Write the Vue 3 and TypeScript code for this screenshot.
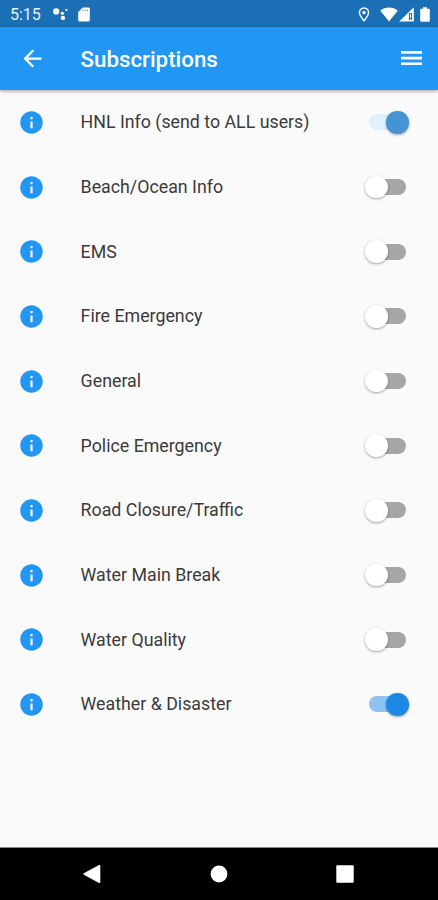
<script setup lang="ts">
import { ref } from 'vue'

interface Subscription {
  name: string
  on: boolean
  locked?: boolean
}

const subscriptions = ref<Subscription[]>([
  { name: 'HNL Info (send to ALL users)', on: true, locked: true },
  { name: 'Beach/Ocean Info', on: false },
  { name: 'EMS', on: false },
  { name: 'Fire Emergency', on: false },
  { name: 'General', on: false },
  { name: 'Police Emergency', on: false },
  { name: 'Road Closure/Traffic', on: false },
  { name: 'Water Main Break', on: false },
  { name: 'Water Quality', on: false },
  { name: 'Weather & Disaster', on: true },
])

function toggle(item: Subscription): void {
  if (!item.locked) item.on = !item.on
}
</script>

<template>
  <div class="screen">
    <div class="status">
      <span class="clock">5:15</span>
      <svg class="assist" width="16" height="14" viewBox="0 0 16 14" fill="#fff">
        <circle cx="4.2" cy="4.4" r="3.1" />
        <circle cx="10.4" cy="6.3" r="1.6" />
        <circle cx="10.9" cy="10.9" r="2.2" />
        <circle cx="14.4" cy="3" r="1.1" />
      </svg>
      <svg class="sd" width="12" height="15" viewBox="0 0 12 15">
        <path fill="#fff" d="M4.6 .5H10.4Q11.8 .5 11.8 1.9V13Q11.8 14.4 10.4 14.4H1.6Q.2 14.4 .2 13V5.2Z" />
        <path stroke="#1b70b5" stroke-opacity=".75" stroke-width="1" d="M5 2.6V4.2M7.2 2.6V4.2M9.4 2.6V4.2" />
      </svg>
      <span class="spacer"></span>
      <svg class="pin" width="12" height="15" viewBox="0 0 12 15" fill="none" stroke="#fff">
        <path stroke-width="1.4" d="M6 13.8C3.6 11 1.4 8.2 1.4 5.6A4.6 4.6 0 0 1 10.6 5.6C10.6 8.2 8.4 11 6 13.8Z" />
        <circle cx="6" cy="5.6" r="1.7" fill="#fff" stroke="none" />
      </svg>
      <svg class="wifi" width="18" height="15" viewBox="0 0 18 15">
        <path fill="#fff" d="M9 14.6L.3 3.8C2.8 1.6 5.7.5 9 .5S15.2 1.6 17.7 3.8Z" />
      </svg>
      <svg class="signal" width="15" height="15" viewBox="0 0 15 15">
        <path fill="#fff" d="M14.8.2V14.6H.2Z" />
        <path fill="#1b70b5" d="M9.9 6H13V13H9.9Z" />
        <path fill="#fff" d="M11 6.8H12V11H11ZM11 12H12V13H11Z" />
      </svg>
      <svg class="battery" width="10" height="15" viewBox="0 0 10 15">
        <path fill="#fff" d="M3 .2H7V1.7H8.6Q9.8 1.7 9.8 2.9V13.5Q9.8 14.7 8.6 14.7H1.4Q.2 14.7 .2 13.5V2.9Q.2 1.7 1.4 1.7H3Z" />
      </svg>
    </div>

    <header class="appbar">
      <button class="icon-button" aria-label="Back">
        <svg width="27" height="27" viewBox="0 0 24 24" fill="#fff">
          <path d="M20 11H7.83l5.59-5.59L12 4l-8 8 8 8 1.41-1.41L7.83 13H20v-2z" />
        </svg>
      </button>
      <h1>Subscriptions</h1>
      <button class="icon-button" aria-label="Menu">
        <svg width="21" height="16" viewBox="0 0 21 16" fill="#fff">
          <path d="M0 1.1H21V3.7H0ZM0 6.8H21V9.4H0ZM0 12.5H21V15.1H0Z" />
        </svg>
      </button>
    </header>

    <main class="list">
      <div v-for="item in subscriptions" :key="item.name" class="row">
        <svg class="info" width="27" height="27" viewBox="0 0 24 24" fill="#2196f3">
          <path d="M12 2C6.48 2 2 6.48 2 12s4.48 10 10 10 10-4.48 10-10S17.52 2 12 2zm1 15h-2v-6h2v6zm0-8h-2V7h2v2z" />
        </svg>
        <span class="label">{{ item.name }}</span>
        <button
          class="switch"
          :class="{ on: item.on, locked: item.locked }"
          role="switch"
          :aria-checked="item.on"
          :aria-label="item.name"
          @click="toggle(item)"
        >
          <span class="thumb"></span>
        </button>
      </div>
    </main>

    <nav class="navbar">
      <svg width="18" height="20" viewBox="0 0 18 20" fill="#fff">
        <path d="M.8 9.2Q-.2 10 .8 10.8L16 18.9Q17.3 19.4 17.3 18V2Q17.3.6 16 1.1Z" />
      </svg>
      <svg width="18" height="18" viewBox="0 0 18 18" fill="#fff">
        <circle cx="9" cy="9" r="8.4" />
      </svg>
      <svg width="18" height="18" viewBox="0 0 18 18" fill="#fff">
        <rect x=".3" y=".3" width="17.4" height="17.4" rx="1" />
      </svg>
    </nav>
  </div>
</template>

<style>
body {
  margin: 0;
}
</style>

<style scoped>
.screen {
  display: flex;
  flex-direction: column;
  width: 438px;
  height: 900px;
  overflow: hidden;
  background: #fafafa;
  font-family: Roboto, 'Liberation Sans', sans-serif;
}

button {
  padding: 0;
  border: 0;
  background: none;
}

svg {
  display: block;
  flex: none;
}

.status {
  display: flex;
  flex: none;
  align-items: center;
  box-sizing: border-box;
  height: 27px;
  padding: 1px 8px 0 10px;
  background: #1b70b5;
}

.clock {
  width: 41px;
  padding-top: 1px;
  color: #e6f1fa;
  font-size: 16px;
  line-height: 20px;
}

.assist {
  margin-left: 1px;
}

.sd {
  margin-left: 10px;
}

.spacer {
  flex: 1;
}

.wifi {
  margin-left: 10px;
}

.signal {
  margin-left: 1px;
}

.battery {
  margin-left: 6px;
}

.appbar {
  display: flex;
  flex: none;
  align-items: center;
  box-sizing: border-box;
  height: 62.5px;
  padding: 0 16px 0 18.5px;
  background: #2196f3;
  box-shadow: 0 1px 4px rgba(0, 0, 0, 0.38);
}

h1 {
  flex: 1;
  margin: 2px 0 0 35px;
  color: #fff;
  font-size: 22.3px;
  font-weight: 500;
  line-height: 28px;
}

.list {
  flex: 1;
  padding-top: 0.6px;
}

.row {
  display: flex;
  align-items: center;
  height: 64.66px;
  padding: 0 32px 0 18.3px;
}

.label {
  flex: 1;
  margin-left: 35.3px;
  color: #3a3a3a;
  font-size: 17.8px;
  line-height: 24px;
}

.switch {
  display: flex;
  align-items: center;
  width: 37.5px;
  height: 16px;
  border-radius: 8px;
  background: #a6a6a6;
}

.thumb {
  flex: none;
  width: 22.5px;
  height: 22.5px;
  margin-left: -3.5px;
  border-radius: 50%;
  background: #fff;
  box-shadow: 0 1px 2.5px rgba(0, 0, 0, 0.36);
}

.switch.on {
  background: #8ec3f3;
}

.switch.on .thumb {
  margin-left: 17.8px;
  background: #1e88e5;
}

.switch.locked {
  background: #e0f0fd;
}

.switch.locked .thumb {
  background: #4594d2;
}

.navbar {
  display: flex;
  flex: none;
  align-items: center;
  justify-content: space-between;
  box-sizing: border-box;
  height: 53px;
  padding: 0 84px 0 83px;
  border-top: 1px solid #858585;
  background: #000;
}
</style>
